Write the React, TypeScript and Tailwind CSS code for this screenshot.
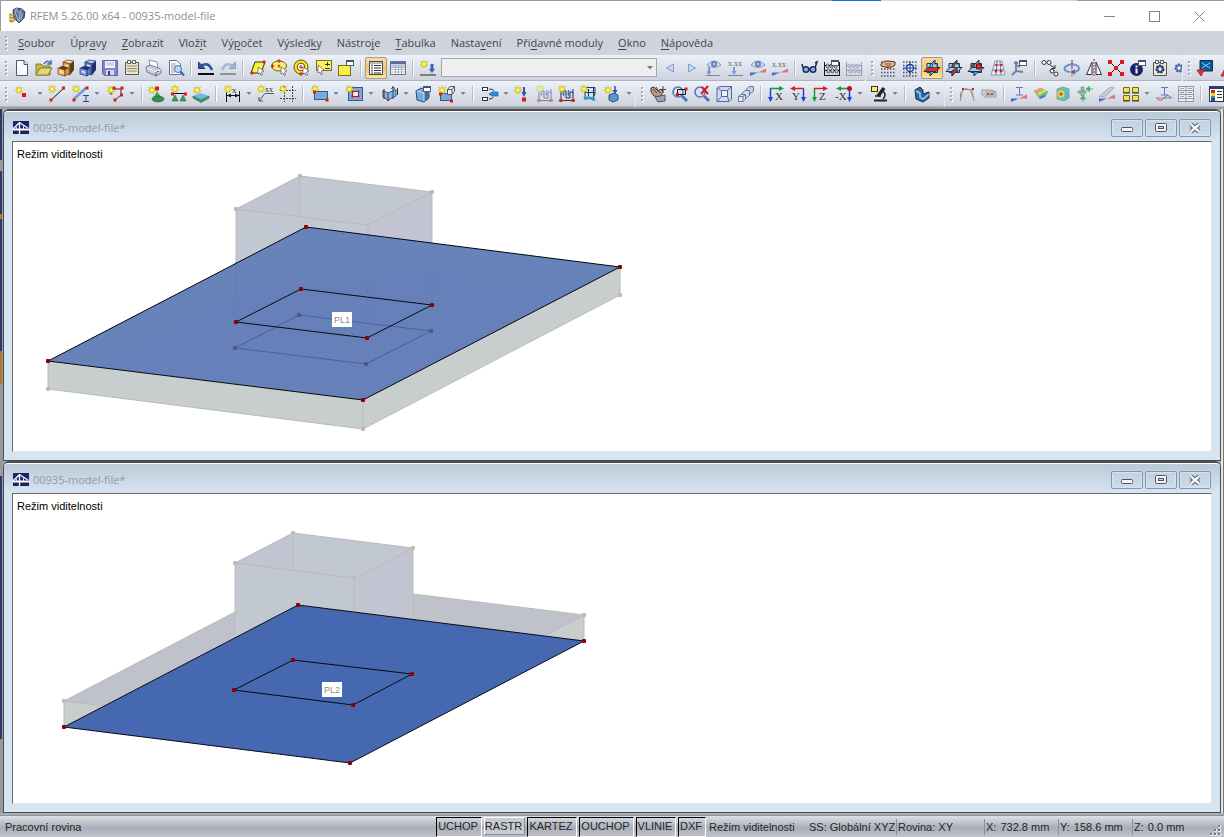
import React from "react";

type Pt = [number, number];

/* ---------- drawing primitives for the 18×18 toolbar glyphs ---------- */

const P = ({ d, c = "#2f3440", w = 1, f = "none" }: { d: string; c?: string; w?: number; f?: string }) => (
  <path d={d} stroke={c} strokeWidth={w} fill={f} />
);
const R = ({ x, y, w, h, f, c = "none" }: { x: number; y: number; w: number; h: number; f: string; c?: string }) => (
  <rect x={x} y={y} width={w} height={h} fill={f} stroke={c} />
);
const Star = ({ x = 4, y = 4 }: { x?: number; y?: number }) => (
  <g transform={`translate(${x} ${y})`}>
    <path d="M0-4L1-1.5 3.5-2.8 2.2-.4 4 1 1.6 1.4 1.6 3.8 0 2 -2 3.6-1.7 1.2-4 .8-2-.7-3.2-3-1-1.6z" fill="#f4e81c" stroke="#b9ab20" strokeWidth=".5" />
    <path d="M0-1.2V1.2M-1.2 0H1.2" stroke="#fffbc0" />
  </g>
);
const Node = ({ x, y, s = 3 }: { x: number; y: number; s?: number }) => (
  <rect x={x - s / 2} y={y - s / 2} width={s} height={s} fill="#e01818" />
);
const Tx = ({ x, y, s, children, c = "#333" }: { x: number; y: number; s: number; children: string; c?: string }) => (
  <text x={x} y={y} fontSize={s} fill={c} fontFamily="Liberation Serif, serif">{children}</text>
);
const Mini = ({ x, y }: { x: number; y: number }) => (
  <>
    <rect x={x + 0.5} y={y + 0.5} width="7" height="5" fill="#fff" stroke="#555b68" />
    <path d={`M${x} ${y + 1}h8`} stroke="#3d5088" strokeWidth="2" />
  </>
);
const Cabinet = ({ top, a, b, e }: { top: string; a: string; b: string; e: string }) => (
  <>
    <path d="M6 3L10 1 17 2 13 5z" fill={top} stroke={e} strokeWidth=".7" />
    <path d="M13 5L17 2V11L13 16z" fill={e} />
    <path d="M6 3L13 5V16L6 14z" fill={a} stroke={e} strokeWidth=".7" />
    <path d="M1 9L5 7 11 8.500 8 11z" fill={e} />
    <path d="M1 9L8 11V17L1 15z" fill={b} stroke={e} strokeWidth=".7" />
    <path d="M8 11L12 8.500V14L8 17z" fill={a} stroke={e} strokeWidth=".7" />
    <path d="M3 12.500L6 13.500M8 6L11 7" stroke="#fff" strokeWidth="1.300" />
  </>
);
const Planes = ({ k }: { k: 0 | 1 | 2 }) => (
  <>
    <path d="M4 4.500H14.500V13.500H4z" fill={k === 2 ? "#ee2626" : "#9fd0f4"} stroke="#16394f" />
    <path d="M7 6L12 1V12L7 17z" fill={k === 1 ? "#ee2626" : "#62aee4"} stroke="#16394f" />
    <path d="M1 12.500L5 8.500H17L13 12.500z" fill={k === 0 ? "#ee2626" : "#9fd0f4"} stroke="#16394f" />
    {k === 1 && <path d="M7 12L12 8.500V12L7 17z" fill="#ee2626" stroke="#16394f" />}
    {k === 2 && <path d="M9.500 5H14V10H9.500z" fill="#ee2626" stroke="#5c1212" />}
    {k !== 2 && <path d="M9.500 5H14V8.500H9.500z" fill="#9fd0f4" stroke="#16394f" strokeWidth=".6" />}
  </>
);
const Axes = ({ t, h, v, flip }: { t: string; h: string; v: string; flip?: boolean }) =>
  flip ? (
    <>
      <path d="M14.500 4V13" stroke={v} strokeWidth="1.500" />
      <path d="M14.500 17l-2.500-5h5z" fill={v} />
      <path d="M5 3.500H15" stroke={h} strokeWidth="1.500" />
      <path d="M1 3.500l5-2.500v5z" fill={h} />
      <Tx x={t.length > 1 ? 0 : 3} y={15} s={11}>{t}</Tx>
    </>
  ) : (
    <>
      <path d="M3.500 3V13" stroke={v} strokeWidth="1.500" />
      <path d="M3.500 17l-2.500-5h5z" fill={v} />
      <path d="M3 3.500H13" stroke={h} strokeWidth="1.500" />
      <path d="M17 3.500l-5-2.500v5z" fill={h} />
      <Tx x={8} y={15} s={11}>{t}</Tx>
    </>
  );
const Frame = ({ c = "#1f2a5a" }: { c?: string }) => (
  <>
    <path d="M3 15V6H8V13H12V7H15V15" stroke={c} fill="none" />
    <path d="M5.500 4v5M10.500 5v4M15 4v5" stroke="#3f6fc8" strokeWidth="1.500" />
    <path d="M4 8.500l1.500 3 1.500-3zM9 8.500l1.500 3 1.500-3z" fill="#3f6fc8" />
    <path d="M1 15.500H17" stroke="#333" />
    <rect x="1.500" y="14" width="3" height="3" fill="#d82020" />
    <rect x="13.500" y="14" width="3" height="3" fill="#d82020" />
  </>
);
const Beads = ({ c }: { c: string }) => (
  <>
    <path d="M1.500 3V17M16.500 3V17M1 6.500H17M1 11.500H17M1 16.500H17" stroke={c} fill="none" />
    {[4.5, 8.5, 12.5].map((x) => (
      <g key={x} fill="#b6c5e4" stroke={c} strokeWidth=".6">
        <ellipse cx={x} cy={7} rx="1.600" ry="2" />
        <ellipse cx={x + 1} cy={12} rx="1.600" ry="2" />
      </g>
    ))}
  </>
);
const Eye = ({ y = 5 }: { y?: number }) => (
  <>
    <path d={`M2 ${y + 1}Q9 ${y - 7} 16 ${y + 1}Q9 ${y + 6} 2 ${y + 1}z`} fill="#d8dfec" stroke="#8d98ab" />
    <circle cx="9" cy={y} r="3" fill="#5b83c9" />
    <circle cx="9" cy={y} r="1" fill="#e8f0ff" />
  </>
);
const Dots = ({ c = "#4a4f5c" }: { c?: string }) => (
  <path d="M2 3H17M2 6.500H17M2 10H17M2 13.500H17M2 17H17" stroke={c} strokeWidth="1.500" strokeDasharray="1.500 1.500" />
);
const Wedge = () => (
  <>
    <path d="M1 17V13.500L9 13.500z" fill="#4a6ad8" />
    <path d="M9 13.500L17 9.500V13.500z" fill="#e67080" />
  </>
);

const icons: Record<string, React.ReactNode> = {
  "Nový": <><P d="M3.500 1.500H11L14.500 5V16.500H3.500z" f="#fbfcff" c="#525866" /><P d="M11 1.500V5.500H15" c="#525866" f="#dde1ea" /></>,
  "Otevřít": <><P d="M1 5h5l2 2h7v9H1z" f="#c9b64a" c="#857a2c" /><P d="M1 16L5 9H17L13 16z" f="#e6d878" c="#857a2c" /><P d="M9 5Q12 0 15 4M16 1V5H12" c="#3c6fb4" w={1.5} /></>,
  "Správce projektů": <Cabinet top="#f6d9a4" a="#e0a04a" b="#f4bd68" e="#5c3c12" />,
  "Správce bloků": <Cabinet top="#b4c6f2" a="#5f80cc" b="#86a3e4" e="#1d2f66" />,
  "Uložit": <><P d="M1.500 1.500H16.500V16.500H3.500L1.500 14.500z" f="#8582c6" c="#6763a8" /><R x={4} y={2} w={10} h={7} f="#f2f3fb" /><P d="M5 4H13M5 6H13" c="#b5b7d4" /><R x={5} y={11} w={8} h={5} f="#d6d7ec" /><R x={7} y={12} w={2} h={4} f="#3f3d70" /></>,
  "Protokol": <><P d="M2.500 3.500H15.500V15.500H2.500z" f="#efe6cd" c="#5b574d" /><P d="M4.500 1.500H7.500V4.500H4.500zM9.500 1.500h3v3H9.500z" f="#fff" c="#5b574d" /><P d="M4 7H14M4 9.500H14M4 12H14" c="#8c8778" /></>,
  "Tisk": <><P d="M4 1L12 3 13 9 5 8z" f="#fff" c="#8a90a0" /><P d="M1 8L5 6 16 10V14L11 17 2 13z" f="#c9cede" c="#767c90" /><P d="M2 9L11 13 16 10" c="#f5f6fb" /><P d="M11 13V17" c="#565c70" /><R x={12} y={12} w={2} h={1} f="#4a66c0" /></>,
  "Náhled": <><P d="M2.500 1.500H10L13.500 5V15.500H2.500z" f="#fbfcff" c="#6a7080" /><P d="M4 5H9M4 7H11M4 9H8M4 11H8M4 13H8" c="#9aa0b0" /><circle cx="11" cy="10" r="3.500" fill="#b9dcf6" stroke="#4673b4" /><P d="M13.500 12.500L17 16.500" c="#3a64a8" w={2} /></>,
  "Zpět": <><P d="M4 7Q11 2 15 11" c="#2c52a0" w={2.5} /><P d="M1.500 3V9.500H8z" f="#2c52a0" c="#1d3876" /><P d="M1 15H17" c="#0b0c10" w={2} /></>,
  "Znovu": <><P d="M14 7Q7 2 3 11" c="#a6b6d8" w={2.5} /><P d="M16.500 3V9.500H10z" f="#a6b6d8" c="#8c9cc0" /><P d="M1 15H17" c="#8b909c" w={2} /></>,
  "Výběr rovnoběžníkem": <><P d="M6 3H16L12 14H2z" f="#fbf33c" c="#383208" /><P d="M15 1v4M13 3h4M3 12v4M1 14h4" c="#d81818" /><P d="M9 8L15 12 12.500 13 13.500 16 12 16.500 11 14 9 15z" f="#fff" c="#555" w={0.7} /></>,
  "Výběr elipsou": <><ellipse cx="8" cy="7" rx="7.500" ry="5" fill="#f8ee6c" stroke="#6a6418" /><P d="M8 0V4M6 2H10M1.500 5V9M0 7H3.500M8 5.500V8.500M6.500 7H9.500" c="#d81818" /><P d="M10 8L16 12 13.500 13 14.500 16 13 16.500 12 14 10 15z" f="#fff" c="#555" w={0.7} /></>,
  "Výběr prstencem": <><circle cx="8" cy="8" r="7" fill="#f8e81c" stroke="#59530f" /><circle cx="8" cy="8" r="3.800" fill="#fff" stroke="#59530f" /><P d="M8 6V10M6 8H10M8 13V17M6 15H10" c="#d81818" /><P d="M10 8L16 12 13.500 13 14.500 16 13 16.500 12 14 10 15z" f="#fff" c="#555" w={0.7} /></>,
  "Výběr zadáním": <><R x={1.5} y={1.5} w={15} h={10} f="#faf060" c="#77701e" /><P d="M12.500 3V7M10 5.500H15M10 9.500H15" /><P d="M3 6L9 11 6.500 12 7.500 15 6 15.500 5 13 3 14z" f="#fff" c="#555" w={0.7} /></>,
  "Zvláštní výběr": <><R x={1.5} y={6.5} w={12} h={10} f="#faf04c" c="#77701e" /><Mini x={9} y={1} /></>,
  "Navigátor": <><R x={2.5} y={2.5} w={13} h={13} f="#fff" c="#444a55" /><P d="M2 4H16" c="#6c7484" /><P d="M7 6.500H14M7 9H14M7 11.500H14M7 14H14" c="#333" /><P d="M5 5V15M4 6.500h2M4 9h2M4 11.500h2M4 14h2" c="#7380a0" /></>,
  "Tabulky": <><R x={1.5} y={2.5} w={15} h={13} f="#fff" c="#6c7488" /><R x={2} y={3} w={14} h={2} f="#5868a0" /><R x={2} y={5} w={14} h={3} f="#c5cee0" /><P d="M2 8.500H16M2 10.500H16M2 13H16M6.500 6V15M9.500 6V15M12.500 6V15" c="#a8b0c2" /></>,
  "Nový zatěžovací stav": <><Star x={5} y={5} /><P d="M13 5V11" c="#3f62b0" w={3} /><P d="M10 10H16L13 14z" f="#3f62b0" c="none" /><P d="M1 16H17" c="#222" /></>,
  "Předchozí": <P d="M12.500 5V13L5.500 9z" f="#c6daf4" c="#7e9ccc" />,
  "Další": <P d="M5.500 5V13L12.500 9z" f="#c6daf4" c="#7e9ccc" />,
  "Zobrazit zatížení": <><Eye y={5} /><P d="M4 8V13" c="#6d93d8" w={2} /><P d="M1.500 12.500h5L4 16z" f="#6d93d8" c="none" /><P d="M1 16.500H15" c="#80848e" /></>,
  "Hodnoty zatížení": <><Tx x={1} y={7} s={8} c="#5a5f6c">x.xx</Tx><P d="M7 8V13" c="#7f9ede" w={2} /><P d="M4.500 12h5L7 16z" f="#7f9ede" c="none" /><P d="M1 16.500H16" c="#80848e" /></>,
  "Zobrazit výsledky": <><Eye y={5} /><Wedge /></>,
  "Hodnoty výsledků": <><Tx x={1} y={8} s={8} c="#5a5f6c">x.xx</Tx><Wedge /></>,
  "Pohled": <><circle cx="5" cy="10.500" r="2.800" fill="#8fb2e6" stroke="#1d2d5a" strokeWidth="1.500" /><circle cx="12" cy="10.500" r="2.800" fill="#8fb2e6" stroke="#1d2d5a" strokeWidth="1.500" /><P d="M2 9L1 5M14 9L16 3 14 4M8 10h1" c="#1d2d5a" w={1.5} /></>,
  "Počítadlo": <><Beads c="#14161c" /><Mini x={8} y={1} /></>,
  "Počítadlo 2": <Beads c="#9a9eaa" />,
  "Rastr úchop": <><Dots /><P d="M2 5Q5 1 10 2L16 3 16 6 11 9 6 8 2 7z" f="#e5b491" c="#5e3820" /><P d="M6 5L12 5M7 7L12 7" c="#8a5636" /></>,
  "Úchop": <><Dots c="#4a5068" /><circle cx="9" cy="9" r="3.500" fill="#e8efff" stroke="#203a90" strokeWidth="1.300" /><P d="M9 2V16M2 9H16" c="#203a90" /></>,
  "Rovina XY": <Planes k={0} />,
  "Rovina YZ": <Planes k={1} />,
  "Rovina XZ": <Planes k={2} />,
  "Pracovní rastr": <><P d="M6 2H13L16 16H2z" f="#e3edf8" c="#8c9cb8" /><P d="M8 2L7 16M11 2L12 16M5 6H14M3 11H15" c="#6c7c9c" /><Node x={7.500} y={6} s={2} /><Node x={12} y={6} s={2} /><Node x={7} y={12} s={2.5} /><Node x={12} y={12} s={2.5} /></>,
  "Souřadný systém": <><P d="M5 2V12M5 12L1 16M5 12L12 13M5 6L9 8M3 4H7" c="#6a80a8" w={1.8} /><Mini x={8} y={1} /></>,
  "Kopírovat": <><circle cx="3" cy="3.500" r="2" fill="#fff" stroke="#333" /><circle cx="8" cy="3.500" r="2" fill="#fff" stroke="#333" /><circle cx="11" cy="12" r="2" fill="#fff" stroke="#333" /><circle cx="15" cy="15" r="2" fill="#fff" stroke="#333" /><P d="M9 6L14 9M14 6V9.500H10.500" /></>,
  "Otočit": <><P d="M7 13Q0 12 2 8Q8 3 15 7Q18 11 12 13" c="#6b92c8" w={2} /><P d="M12 10V16L8 13z" f="#4b76b8" c="none" /><path d="M9 1V17" stroke="#b81818" strokeDasharray="4 1" /></>,
  "Zrcadlit": <><P d="M7 3V15.500H1.500zM11 3V15.500H16.500z" f="#f5f6fa" /><path d="M9 0V18" stroke="#c01818" strokeDasharray="2 1" /></>,
  "Promítnout": <><P d="M3 3L15 15M15 3L3 15" c="#14161c" /><Node x={3} y={3} s={4} /><Node x={15} y={3} s={4} /><Node x={3} y={15} s={4} /><Node x={15} y={15} s={4} /><Node x={9} y={9} s={4} /></>,
  "Informace": <><circle cx="7.500" cy="10.500" r="6.500" fill="#1a2268" /><P d="M7.500 9.500V14.500M7.500 6.500V8.500" c="#fff" w={2} /><Mini x={9} y={1} /></>,
  "Nastavení zobrazení": <><P d="M2.500 3.500H15.500V16.500H2.500z" f="#eae6d8" c="#555" /><P d="M4.500 1.500H7.500V4.500H4.500zM9.500 1.500h3v3H9.500z" f="#fff" c="#555" /><circle cx="9" cy="10" r="3.500" fill="#4c6aac" stroke="#1d2f5c" strokeDasharray="2 1" strokeWidth="2" /><circle cx="9" cy="10" r="1.500" fill="#fff" /></>,
  "Komentář": <><circle cx="6" cy="9" r="3.500" fill="#7594cc" stroke="#3c5694" strokeWidth="2" strokeDasharray="2 1" /><circle cx="6" cy="9" r="1.500" fill="#fff" /></>,
  "Modul": <><P d="M4 1.500H16.500V12H4z" f="#0e5b9c" c="#083050" /><P d="M6 4L14 9M14 4L6 9" c="#8fd0f2" /><P d="M1 11H8L5 17z" f="#e23232" c="#b02828" /></>,
  "Modul 2": <P d="M8 8L3 17H12z" f="#e23232" c="#b02828" />,

  "Uzel": <><Star x={4} y={5} /><Node x={9} y={10} s={4} /></>,
  "Linie": <><P d="M3 15L16 3" c="#111" /><Star x={4} y={4} /><Node x={3} y={15} /><Node x={15.500} y={3} /></>,
  "Prut": <><P d="M2 14L14 3" c="#7ba0d0" w={3} /><Star x={4} y={4} /><Node x={2} y={15} /><Node x={15} y={3} /><P d="M11 10.500H17M14 10V16M11 16.500H17" c="#254c9c" /></>,
  "Linie obecná": <><P d="M4 10V4H14V10L8 15" c="#333" /><Star x={4} y={5} /><Node x={7} y={3} /><Node x={15} y={3} /><Node x={14.500} y={10} /><Node x={8} y={15} /></>,
  "Podpora uzlu": <><Node x={9} y={3.500} s={4} /><Star x={4} y={5} /><P d="M9 6L13 12H6z" f="#44a860" c="none" /><ellipse cx="10" cy="14" rx="6" ry="3" fill="#2f9450" stroke="#195a30" strokeWidth=".6" /></>,
  "Podpora linie": <><P d="M2 8.500H16" c="#111" /><Star x={5} y={4} /><Node x={2.500} y={9} /><Node x={15.500} y={9} /><P d="M5 10L8 16H2zM13 10L16 16H10z" f="#3f9c58" c="#1c6a36" w={0.6} /></>,
  "Podpora plochy": <><P d="M1 11L8 8 17 11 9 15z" f="#75b4e8" c="none" /><P d="M1 11L9 15 17 11V13L9 17.500 1 13z" f="#38a060" c="#1b6a38" w={0.6} /><Star x={5} y={5} /></>,
  "Kóta": <><P d="M2.500 7V17M15.500 6V17M2 10.500H16" c="#111" /><P d="M3 10.500l4-2v4zM15 10.500l-4-2v4z" f="#111" c="none" /><Star x={4} y={4} /><Tx x={8} y={8} s={9}>x</Tx></>,
  "Poznámka": <><P d="M2 16L8 8.500H17M2 12V16H6" c="#555" /><Star x={4} y={4} /><Tx x={8} y={7} s={8}>xx</Tx></>,
  "Pomocné linie": <><path d="M5.500 1V17M13.500 1V17M1 5.500H17M1 13.500H17" stroke="#444" strokeDasharray="2 1" /><Star x={4} y={4} /></>,
  "Plocha": <><R x={3.5} y={6.500} w={13} h={8} f="#7ba9dc" c="#315a8c" /><Star x={4} y={4} /><Node x={3.500} y={7} /><Node x={16} y={15} /></>,
  "Otvor": <><R x={2.500} y={2.500} w={14} h={13} f="#7ba9dc" c="#315a8c" /><R x={6.500} y={6.500} w={6} h={5} f="#eef2fa" c="#a02020" /><Node x={6.500} y={6.500} s={2} /><Node x={12.500} y={6.500} s={2} /><Node x={6.500} y={11.500} s={2} /><Node x={12.500} y={11.500} s={2} /><Star x={3.500} y={4} /></>,
  "Průnik": <><P d="M2 5.500L7 8 15 4.500V11L7 15 2 12z" f="#8db4e0" c="#315a8c" /><P d="M7 8V15M12 2V14" c="#284a78" /><P d="M10.500 4L12 1.500 13.500 4M3 4V14M16.500 3V10" c="#333" /><Node x={7} y={15} s={2} /></>,
  "Těleso": <><P d="M2 6L7 3 15 5V13L10 17 3 15z" f="#7ba9dc" c="#2b4a72" /><P d="M10 8L15 5V13L10 17z" f="#3f6ca4" c="none" /><P d="M3 6L10 8V16" c="#cfe2f5" /><Mini x={9} y={1} /></>,
  "Těleso z ploch": <><R x={2.500} y={8.500} w={11} h={7} f="#7ba9dc" c="#315a8c" /><P d="M9.500 4.500L12 1.500H16.500V6L14 9.500H9.500zM9.500 4.500h4.500v5M14 4.500l2.500-3" c="#555" f="#f1f3f8" /><Star x={4} y={5} /><Node x={2.500} y={9} /><Node x={13.500} y={16} /></>,
  "Spojit": <><R x={1.500} y={2.500} w={5} h={3} f="#fff" c="#333" /><R x={1.500} y={12.500} w={5} h={3} f="#fff" c="#333" /><P d="M8 4Q13 4 13 6M8 14Q12 14 12 12" c="#333" /><P d="M11 7H17V11H11L8 9z" f="#2a8de0" c="#1660a0" w={0.7} /></>,
  "Zatížení uzlu": <><Star x={4} y={5} /><P d="M10 2V8" c="#2b52b0" w={2} /><P d="M7.500 7h5L10 12z" f="#2b52b0" c="none" /><Node x={10} y={14.500} s={4} /></>,
  "Zatížení prutu": <g opacity=".5"><Frame /><Star x={4} y={4} /></g>,
  "Zatížení linie": <><Frame /><Star x={4} y={4} /></>,
  "Zatížení plochy": <><P d="M5 2.500H15V9L13 13H5z" f="#d3e4f5" c="#1c3c5c" /><P d="M4 14Q9 11 15 15" c="#3c98b8" w={3} /><P d="M8.500 4v7M13.500 3v9M5 7.500h10" c="#1b3658" /><Star x={4} y={4} /></>,
  "Zatížení tělesa": <><P d="M5 10L10 8 14 10V15L9 17 5 15z" f="#5b97cc" c="#24557f" /><P d="M11 1V6" c="#2b52b0" w={1.5} /><P d="M8.500 5h5L11 9z" f="#2b52b0" c="none" /><Star x={4} y={5} /></>,
  "Posun pohledu": <><P d="M2 3L5 2 9 6 12 4 14 7 11 12 5 11 2 7z" f="#b99a84" c="#553724" /><P d="M4 4L8 8M7 2L11 8M14 1V8M11 4.500H17" c="#3b3f48" /><P d="M6 12L16 10V16L9 17z" f="#9ea5b0" c="#4f5561" /></>,
  "Lupa oknem": <><circle cx="7" cy="7" r="5" fill="#d4e5f8" stroke="#5373b4" strokeWidth="1.500" /><P d="M11 11L16 16" c="#4c72b8" w={3} /><P d="M6.500 4.500H14.500V9.500H6.500z" c="#111" /><Node x={6.500} y={9.500} /><Node x={15} y={4} /></>,
  "Zrušit lupu": <><circle cx="7" cy="7" r="5" fill="#d4e5f8" stroke="#5373b4" strokeWidth="1.500" /><P d="M11 11L16 16" c="#4c72b8" w={3} /><P d="M9 2L15 9M15 1L8 9" c="#d81c1c" w={2} /></>,
  "Perspektiva": <><P d="M2 3L5 1.500H16.500V14L14 16.500H2z" f="#cfdcef" c="#52689c" /><P d="M6.500 5.500H12.500V11.500H6.500zM2 3L6.500 5.500M16.500 1.500L12.500 5.500M12.500 11.500L14 16.500M6.500 11.500L2 16.500" c="#52689c" f="#eef3fb" /></>,
  "Více pohledů": <><P d="M9.500 4L12 1.500H16.500V6L14 8.500H9.500z" f="#c6d2ea" c="#62789c" /><P d="M5.500 8L8 5.500H12.500V10L10 12.500H5.500z" f="#d6dff0" c="#62789c" /><P d="M1.500 11.500L4 9.500H8.500V14L6 16.500H1.500zM1.500 11.500h4.500v5M6 11.500l2.500-2" f="#e7edf8" c="#62789c" /></>,
  "Pohled X": <Axes t="X" h="#189c38" v="#2040d8" />,
  "Pohled Y": <Axes t="Y" h="#d82020" v="#2040d8" flip />,
  "Pohled Z": <Axes t="Z" h="#d82020" v="#189c38" />,
  "Pohled -X": <><Axes t="-X" h="#189c38" v="#2040d8" flip /><circle cx="14.500" cy="3.500" r="2.500" fill="#c01010" /></>,
  "Viditelnost": <><R x={1.500} y={1.500} w={6} h={5} f="#faf04c" c="#333" /><P d="M8 11L14 3" c="#222" w={3.5} /><P d="M13 6Q17 10 13 14M5 11H11" c="#222" w={1.5} /><P d="M4 15.500H17" c="#222" w={2} /></>,
  "Zobrazení modelu": <><P d="M2 5L7 2 10 5V9L16 7V13L10 17 3 14z" f="#2d6ba8" c="#0f2f50" /><P d="M3 6L7 8V12L10 14 16 9" c="#9cd0f0" w={1.5} /></>,
  "Průběhy": <><P d="M2 16L5 4.500H14L16 16" c="#6cae80" /><P d="M2.500 16V8L7 3.500 14 5M12 5L15 12" c="#b8828a" /><Node x={5} y={4} s={2} /><Node x={15} y={4} s={2} /></>,
  "Animace": <><P d="M2 5H12L16 7V12H5L2 10z" f="#cfd3d9" c="#989da7" /><R x={6} y={7} w={8} h={3} f="#f5f5f5" c="#999" /><R x={7} y={8} w={2} h={2} f="#4a66c0" /><R x={9} y={8} w={2} h={2} f="#e8a030" /><R x={11} y={8} w={2} h={2} f="#d84040" /></>,
  "Vnitřní síly": <><P d="M6 2.500H13M9.500 2V10M6 10H13" c="#6579ac" /><Wedge /></>,
  "Výsledky na plochách": <><P d="M2 6L9 3 16 7 13 12 8 14z" f="#70c87c" c="#8cac98" w={0.6} /><P d="M2 6L9 3 12 5 6 8z" f="#f4a050" c="none" /><P d="M6 8L12 5 14 6 7 10z" f="#e8e060" c="none" /><P d="M7 12L14 9 12 12 8 14z" f="#4a78d8" c="none" /></>,
  "Výsledky v tělese": <><P d="M3 4L9 2 15 4V13L10 16 3 14z" f="#6cc6a0" c="#6490a0" w={0.7} /><circle cx="7" cy="9" r="3.500" fill="#e8d84c" /><circle cx="7" cy="9" r="1.700" fill="#e24c30" /><P d="M12.500 6V14" c="#4cbcd8" w={3} /></>,
  "Reakce": <><P d="M2 6H10V8H8V11H5V8H2zM5 2H8V6H5z" f="#8cbc98" c="#6e9c7c" w={0.7} /><P d="M10 4L13.500 1.500V6.500zM13 4H17" f="#58ac6c" c="#58ac6c" /><P d="M7 10.500L4.500 14H9.500zM7 13V17" f="#58ac6c" c="#58ac6c" /></>,
  "Deformace": <><P d="M1 12L11 3Q15 1 16 3L8 11z" f="#c8cedc" c="#a0a8ba" /><Wedge /></>,
  "Panely": <><P d="M1.500 2.500H7.500V7.500H1.500zM10.500 2.500H16.500V7.500H10.500zM1.500 10.500H7.500V15.500H1.500zM10.500 10.500H16.500V15.500H10.500z" f="#f2e060" c="#7c6a18" /><P d="M1 8H8M10 8H17M1 16H8M10 16H17" c="#443a08" /></>,
  "Řez": <><P d="M6 2.500H13M9.500 2V10M6 10H13" c="#6579ac" /><P d="M1 13H17" c="#7e8698" /><P d="M2 13Q5 18 9 13" c="#e05060" /><P d="M9 13Q13 8 16 13" c="#5070d0" /></>,
  "Tabulka výsledků": <><R x={1.500} y={1.500} w={15} h={15} f="#eef0f6" c="#9098ac" /><P d="M9 1V17M1 5.500H17M1 9.500H17M1 13.500H17" c="#9098ac" /><P d="M3 3.500h4M11 3.500h4M3 11.500h4M11 11.500h4" c="#d08c98" /><P d="M3 7.500h4M11 7.500h4" c="#8090c8" /></>,
  "Panel": <><R x={2.500} y={1.500} w={14} h={15} f="#fff" c="#333" /><R x={2} y={1} w={15} h={3} f="#2e3d66" /><R x={4} y={5} w={4} h={3} f="#d82020" /><R x={4} y={8} w={4} h={3} f="#e8d820" /><R x={4} y={11} w={4} h={2} f="#30a040" /><R x={4} y={13} w={4} h={3} f="#2040d0" /><P d="M10 6.500H15M10 9.500H15M10 12.500H15" /></>,
};

/* ---------- toolbar description: "|" separator, "+" split button, "*" pressed button, "<" button cut by the band's end ---------- */

const row1: string[][] = [
  ["Nový", "Otevřít", "Správce projektů", "Správce bloků", "Uložit", "Protokol", "Tisk", "Náhled", "|", "Zpět", "Znovu", "|",
    "Výběr rovnoběžníkem", "Výběr elipsou", "Výběr prstencem", "Výběr zadáním", "Zvláštní výběr", "|", "*Navigátor", "Tabulky", "|",
    "Nový zatěžovací stav", "select", "Předchozí", "Další", "Zobrazit zatížení", "Hodnoty zatížení", "Zobrazit výsledky", "Hodnoty výsledků", "|",
    "Pohled", "Počítadlo", "Počítadlo 2"],
  ["Rastr úchop", "Úchop", "*Rovina XY", "Rovina YZ", "Rovina XZ", "Pracovní rastr", "Souřadný systém", "|", "Kopírovat", "Otočit",
    "Zrcadlit", "Promítnout", "Informace", "Nastavení zobrazení", "<Komentář"],
  ["Modul", "<Modul 2"],
];
const row2: string[][] = [
  ["+Uzel", "Linie", "+Prut", "+Linie obecná", "|", "Podpora uzlu", "Podpora linie", "Podpora plochy", "|", "+Kóta", "Poznámka", "Pomocné linie", "|",
    "+Plocha", "+Otvor", "+Průnik", "Těleso", "+Těleso z ploch", "|", "+Spojit", "Zatížení uzlu", "Zatížení prutu", "Zatížení linie", "Zatížení plochy", "+Zatížení tělesa"],
  ["Posun pohledu", "Lupa oknem", "Zrušit lupu", "Perspektiva", "Více pohledů", "|", "Pohled X", "Pohled Y", "Pohled Z", "+Pohled -X", "+Viditelnost", "|", "+Zobrazení modelu"],
  ["Průběhy", "Animace", "|", "Vnitřní síly", "Výsledky na plochách", "Výsledky v tělese", "Reakce", "Deformace", "+Panely", "Řez", "Tabulka výsledků", "|", "Panel"],
];

const Grip = () => (
  <span className="flex w-[11px] shrink-0 flex-col items-center gap-0.5">
    {[0, 1, 2, 3].map((i) => (
      <i key={i} className="h-0.5 w-0.5 bg-[#a5abb9] shadow-[1px_1px_0_#fff]" />
    ))}
  </span>
);

const Glyph = ({ name }: { name: string }) => (
  <svg viewBox="0 0 18 18" className="h-[18px] w-[18px] shrink-0 overflow-visible" aria-hidden="true">{icons[name]}</svg>
);

function Tool({ item }: { item: string }) {
  if (item === "|") {
    return (
      <span className="flex w-2 shrink-0 justify-center">
        <i className="h-4 w-0.5 border-r border-white bg-[#b4b9c5]" />
      </span>
    );
  }
  if (item === "select") {
    return (
      <span className="relative mr-0.5 ml-0.5 flex h-[19px] w-[216px] shrink-0 items-center">
        <select aria-label="Zatěžovací stav" className="h-full w-full appearance-none border border-[#a3a7b0] bg-[#efefef]" />
        <svg viewBox="0 0 6 4" className="pointer-events-none absolute right-1 h-1 w-1.5" aria-hidden="true"><path d="M0 0H6L3 3.500z" fill="#7a7e88" /></svg>
      </span>
    );
  }
  if (item[0] === "+") {
    const name = item.slice(1);
    return (
      <button type="button" aria-label={name} className="flex h-[22px] w-[35px] shrink-0 items-center gap-1 pl-1">
        <Glyph name={name} />
        <svg viewBox="0 0 6 4" className="h-1 w-1.5" aria-hidden="true"><path d="M.5 0H5.500L3 3z" fill="#7d828e" /></svg>
      </button>
    );
  }
  if (item[0] === "*") {
    const name = item.slice(1);
    return (
      <button type="button" aria-label={name} aria-pressed="true" className="flex h-[22px] w-[22px] shrink-0 items-center justify-center rounded-xs border border-[#a39a8a] bg-linear-to-b from-[#fbd9a4] via-[#fbc06a] to-[#ffe59a]">
        <Glyph name={name} />
      </button>
    );
  }
  if (item[0] === "<") {
    const name = item.slice(1);
    return (
      <button type="button" aria-label={name} className="flex h-[22px] w-[11px] shrink-0 items-center overflow-hidden pl-0.5">
        <Glyph name={name} />
      </button>
    );
  }
  return (
    <button type="button" aria-label={item} className="flex h-[22px] w-[22px] shrink-0 items-center justify-center">
      <Glyph name={item} />
    </button>
  );
}

const ToolRow = ({ bands }: { bands: string[][] }) => (
  <div className="flex h-[26px] shrink-0 gap-px overflow-hidden bg-[#e4e8f0]">
    {bands.map((band, i) => (
      <div key={i} className="flex shrink-0 items-center rounded-r-xs border-b border-[#b0b4be] bg-linear-to-b from-[#edf1f8] to-[#cfd3de] last:grow">
        <Grip />
        {band.map((item, j) => <Tool key={j} item={item} />)}
      </div>
    ))}
  </div>
);

const menu: [string, string, string][] = [
  ["", "S", "oubor"], ["Úpr", "a", "vy"], ["", "Z", "obrazit"], ["Vlož", "i", "t"], ["Vý", "p", "očet"], ["Výsled", "k", "y"],
  ["Nástro", "j", "e"], ["", "T", "abulka"], ["Nasta", "v", "ení"], ["Pří", "d", "avné moduly"], ["", "O", "kno"], ["", "N", "ápověda"],
];

/* ---------- model views ---------- */

const pts = (a: Pt[]) => a.map((p) => p.join(",")).join(" ");
const Dot = ({ p, c = "#8b0008" }: { p: Pt; c?: string }) => <rect x={p[0] - 2} y={p[1] - 2} width="4" height="4" rx="1" fill={c} />;
const Label = ({ x, y, t }: { x: number; y: number; t: string }) => (
  <>
    <rect x={x} y={y} width="20" height="15" fill="#fff" />
    <text x={x + 2} y={y + 11} fontSize="9" fontFamily="Liberation Sans, sans-serif" fill="#8c8c8c">{t}</text>
  </>
);

function TopView() {
  const slab: Pt[] = [[48, 361], [306, 227], [620, 267], [363, 400]];
  const box: Pt[] = [[236, 209], [300, 176], [432, 192], [368, 225]];
  const opening: Pt[] = [[236, 322], [301, 289], [432, 305], [367, 338]];
  const lower: Pt[] = [[235, 348], [299, 315], [431, 331], [366, 364]];
  const g = "#bcb8ba";
  return (
    <svg viewBox="13 142 620 309" className="absolute top-0 left-0 h-[309px] w-[620px]" role="img" aria-label="PL1">
      <polygon points="236,209 300,176 432,192 432,305 368,338 236,322" fill="#c2c8d1" />
      <polygon points="236,209 300,176 300,217" fill="#c1c4d1" />
      <polygon points="368,225 432,192 432,305 368,338" fill="#c2c5d1" />
      <g stroke={g} fill="none">
        <polygon points={pts(box)} />
        <path d="M236 209V322M300 176V218M432 192V305M368 225V338" />
      </g>
      {box.map((p, i) => <Dot key={i} p={p} c="#c5b6ba" />)}
      <polygon points="48,361 363,400 620,267 620,295 363,429 48,389" fill="#c8cecd" stroke={g} />
      <path d="M363 400V429" stroke={g} />
      <polygon points={pts(slab)} fill="#6681b9" />
      <polygon points="48,361 306,227 620,267 572,290 432,271 236,291 98,366" fill="#6783ba" />
      <path d="M236 262V322M368 236V338M432 243V305" stroke="#627db5" />
      <polygon points={pts(lower)} fill="none" stroke="#4a6199" />
      {lower.map((p, i) => <Dot key={i} p={p} c="#5a5188" />)}
      <polygon points={pts(opening)} fill="none" stroke="#080a10" />
      <polygon points={pts(slab)} fill="none" stroke="#080a10" />
      {[...slab, ...opening].map((p, i) => <Dot key={i} p={p} />)}
      {([[48, 389], [363, 429], [620, 295]] as Pt[]).map((p, i) => <Dot key={i} p={p} c="#c5b6ba" />)}
      <Label x={332} y={312} t="PL1" />
    </svg>
  );
}

function BottomView() {
  const slab: Pt[] = [[64, 727], [298, 605], [584, 641], [350, 763]];
  const box: Pt[] = [[235, 563], [293, 533], [413, 548], [354, 578]];
  const opening: Pt[] = [[234, 690], [293, 660], [412, 674], [353, 705]];
  const g = "#bcb8ba";
  return (
    <svg viewBox="13 494 620 309" className="absolute top-0 left-0 h-[309px] w-[620px]" role="img" aria-label="PL2">
      <polygon points="64,701 235,612 235,638 64,727" fill="#bfc2ca" />
      <polygon points="64,701 97,705 97,710 64,727" fill="#c8cecd" />
      <polygon points="413,594 584,615 584,641 413,620" fill="#bfc2ca" />
      <polygon points="584,615 546,635 584,641" fill="#c8cecd" />
      <path d="M235 612L64 701V727M64 701L97 705M413 594L584 615V641M584 615L546 635" stroke={g} fill="none" />
      <polygon points="235,563 293,533 413,548 413,620 298,605 235,638" fill="#c2c8d0" />
      <polygon points="235,563 293,533 293,571" fill="#c1c4d1" />
      <polygon points="354,578 413,548 413,620 354,613" fill="#c2c5d1" />
      <g stroke={g} fill="none">
        <polygon points={pts(box)} />
        <path d="M235 563V638M293 533V571M413 548V620M354 578V613" />
      </g>
      {([...box, [64, 701], [584, 615]] as Pt[]).map((p, i) => <Dot key={i} p={p} c="#c5b6ba" />)}
      <polygon points={pts(slab)} fill="#4668b0" stroke="#080a10" />
      <polygon points={pts(opening)} fill="none" stroke="#080a10" />
      {[...slab, ...opening].map((p, i) => <Dot key={i} p={p} />)}
      <Label x={322} y={682} t="PL2" />
    </svg>
  );
}

const frameButton = "flex h-[18px] w-8 items-center justify-center rounded-xs border border-[#8496b4] bg-linear-to-b from-[#c3d1e0] to-[#cddbea] shadow-[inset_0_0_0_1px_#d6e2ee]";

function ModelWindow({ children }: { children: React.ReactNode }) {
  return (
    <section className="flex min-h-40 flex-1 flex-col rounded-t-md border border-t-2 border-[#4b4d52] bg-[#d7e4f1] px-2 pb-2">
      <header className="-mx-2 flex h-[30px] shrink-0 items-center rounded-t-sm border-t border-white bg-linear-to-b from-[#bccad8] to-[#d7e4f1] px-[9px] pt-0.5">
        <svg viewBox="0 0 16 13" className="h-[13px] w-4" aria-hidden="true">
          <rect width="16" height="13" fill="#1c2369" />
          <path d="M0 8.500H16" stroke="#fff" strokeWidth="2" />
          <path d="M0 8L6 2M7 2L15 7M6.500 1V13" stroke="#fff" strokeWidth="1.300" fill="none" />
          <path d="M3.500 5.500V8M10.500 5V8" stroke="#cdd3ea" />
        </svg>
        <h2 className="ml-1 flex-1 text-[11px] leading-4 text-[#939aa3]">00935-model-file*</h2>
        <div className="flex gap-0.5">
          <button type="button" aria-label="Minimalizovat" className={frameButton}>
            <svg viewBox="0 0 12 10" className="h-2.5 w-3" aria-hidden="true"><rect x=".5" y="4.500" width="11" height="4" rx="1" fill="#f4f4f4" stroke="#4d5566" /></svg>
          </button>
          <button type="button" aria-label="Maximalizovat" className={frameButton}>
            <svg viewBox="0 0 12 10" className="h-2.5 w-3" aria-hidden="true"><rect x=".5" y=".5" width="11" height="8" rx="1" fill="#f4f4f4" stroke="#4d5566" /><rect x="3.500" y="3.500" width="5" height="2" fill="#c5d2e1" stroke="#4d5566" /></svg>
          </button>
          <button type="button" aria-label="Zavřít okno" className={frameButton}>
            <svg viewBox="0 0 12 10" className="h-2.5 w-3" aria-hidden="true"><path d="M2 1.500L10 8.500M10 1.500L2 8.500" stroke="#4d5566" strokeWidth="4.500" /><path d="M2 1.500L10 8.500M10 1.500L2 8.500" stroke="#f6f6f6" strokeWidth="2.500" /></svg>
          </button>
        </div>
      </header>
      <div className="relative flex-1 overflow-hidden border border-t-[#696969] border-r-[#e3e3e3] border-b-[#e3e3e3] border-l-[#696969] bg-white">
        <p className="px-1 pt-1.5 font-['Liberation_Sans',sans-serif] text-[11px] leading-3 text-black">Režim viditelnosti</p>
        {children}
      </div>
    </section>
  );
}

/* ---------- status bar ---------- */

const toggles: [string, string][] = [
  ["UCHOP", "w-[46px]"], ["RASTR", "w-[41px]"], ["KARTEZ", "w-[50px]"], ["OUCHOP", "w-[55px]"], ["VLINIE", "w-10"], ["DXF", "w-7"],
];

function StatusBar() {
  return (
    <footer className="flex h-[22px] shrink-0 items-center border-t border-[#8f939c] bg-linear-to-b from-[#dfe1e5] via-[#a9aeb8] via-55% to-[#bfc3cb] font-['Liberation_Sans',sans-serif] text-[11px] leading-4 text-[#25272c]">
      <span className="flex-1 pl-[5px]">Pracovní rovina</span>
      <div className="flex h-full gap-0.5">
        {toggles.map(([name, width]) => (
          <button
            key={name}
            type="button"
            aria-pressed={name !== "RASTR"}
            className={`${width} mt-px flex justify-center border pr-0.5 leading-4 ${name === "RASTR" ? "h-[18px] border-t-white border-r-[#8b8f98] border-b-[#8b8f98] border-l-white bg-[#c8cbd1]" : "h-5 border-t-black border-r-white border-b-white border-l-black"}`}
          >
            {name}
          </button>
        ))}
      </div>
      <span className="w-[100px] shrink-0 pl-[3px]">Režim viditelnosti</span>
      <span className="w-[90px] shrink-0 pl-[3px] whitespace-nowrap">SS: Globální XYZ</span>
      <span className="w-[88px] shrink-0 border-l border-[#8b8f98] pl-px">Rovina: XY</span>
      <span className="flex w-[74px] shrink-0 gap-1 border-l border-[#8b8f98] pl-px">X: <span>732.8 mm</span></span>
      <span className="flex w-[74px] shrink-0 gap-1 border-l border-[#8b8f98] pl-px">Y: <span>158.6 mm</span></span>
      <span className="flex w-[78px] shrink-0 gap-1 border-l border-[#8b8f98] pl-px">Z: <span>0.0 mm</span></span>
      <svg viewBox="0 0 12 12" className="mr-0.5 h-3 w-3 self-end" aria-hidden="true">
        <path d="M8 0h3v3H8zM4 4h3v3H4zM8 4h3v3H8zM0 8h3v3H0zM4 8h3v3H4zM8 8h3v3H8z" fill="#e9ebef" />
        <path d="M8 0h2v2H8zM4 4h2v2H4zM8 4h2v2H8zM0 8h2v2H0zM4 8h2v2H4zM8 8h2v2H8z" fill="#72798a" />
      </svg>
    </footer>
  );
}

export default function App() {
  return (
    <div className="flex h-screen flex-col overflow-hidden bg-white font-['Open_Sans','Noto_Sans',sans-serif]">
      <div className="flex h-px shrink-0 bg-[#9a9a9a]">
        <i className="w-[68%]" />
        <i className="w-[4%] bg-[#0a78d0]" />
        <i className="w-[16%] bg-[#d8d8d8]" />
      </div>
      <header className="flex h-[30px] shrink-0 items-center border-l border-[#9a9a9a] bg-white">
        <svg viewBox="0 0 18 18" className="ml-[7px] h-[18px] w-[18px]" aria-hidden="true">
          <path d="M5 3L9 1 14 2 17 5 16 11 11 16 6 11z" fill="#5b7196" stroke="#2d3e5e" />
          <path d="M7 3L12 6M9 1L7 5 11 15M12 6L11 15M12 6L14 2M14 6L13 13" stroke="#a9bbd6" fill="none" />
          <text x="1" y="15" fontSize="11" fontWeight="bold" fontFamily="Liberation Sans, sans-serif" fill="#f8cf22" stroke="#5c4a08" strokeWidth=".4">5</text>
        </svg>
        <h1 className="ml-1 flex-1 text-[11px] leading-4 text-[#8f8f8f]">RFEM 5.26.00 x64 - 00935-model-file</h1>
        <div className="flex h-full pr-0.5">
          <button type="button" aria-label="Minimalizovat aplikaci" className="flex w-[45px] items-center justify-center"><svg viewBox="0 0 11 11" className="h-[11px] w-[11px]"><path d="M0 5.500H11" stroke="#858585" /></svg></button>
          <button type="button" aria-label="Maximalizovat aplikaci" className="flex w-[45px] items-center justify-center"><svg viewBox="0 0 11 11" className="h-[11px] w-[11px]"><rect x=".5" y=".5" width="10" height="10" fill="none" stroke="#858585" /></svg></button>
          <button type="button" aria-label="Zavřít aplikaci" className="flex w-[45px] items-center justify-center"><svg viewBox="0 0 11 11" className="h-[11px] w-[11px]"><path d="M.5 .5L10.500 10.500M10.500 .5L.5 10.500" stroke="#858585" fill="none" /></svg></button>
        </div>
      </header>
      <nav className="flex h-[24px] shrink-0 items-center bg-[#cfd3dc]">
        <Grip />
        <div className="flex gap-px">
          {menu.map(([a, u, b]) => (
            <button key={a + u + b} type="button" className="px-[7px] text-[11px] leading-4 whitespace-nowrap text-[#41454e]">
              {a}<u className="underline-offset-2">{u}</u>{b}
            </button>
          ))}
        </div>
      </nav>
      <ToolRow bands={row1} />
      <ToolRow bands={row2} />
      <div className="h-0.5 shrink-0 bg-[#9b9fa6]" />
      <main className="flex min-h-0 flex-1 bg-[#a9aeb5] pb-0.5">
        <div className="w-[3px] shrink-0 border-r border-[#9a9a9a] bg-[linear-gradient(#2b3a6b_51px,#999_51px_62px,#2b3a6b_62px_105px,#b07a26_105px_110px,#2b3a6b_110px_242px,#b07a26_242px_275px,#999_275px_367px,#2b3a6b_367px_630px,#999_630px)]" />
        <div className="flex min-w-0 flex-1 flex-col">
          <ModelWindow><TopView /></ModelWindow>
          <ModelWindow><BottomView /></ModelWindow>
        </div>
        <div className="w-[3px] shrink-0 border-r border-[#777] bg-[#e6e3e0]" />
      </main>
      <StatusBar />
    </div>
  );
}
